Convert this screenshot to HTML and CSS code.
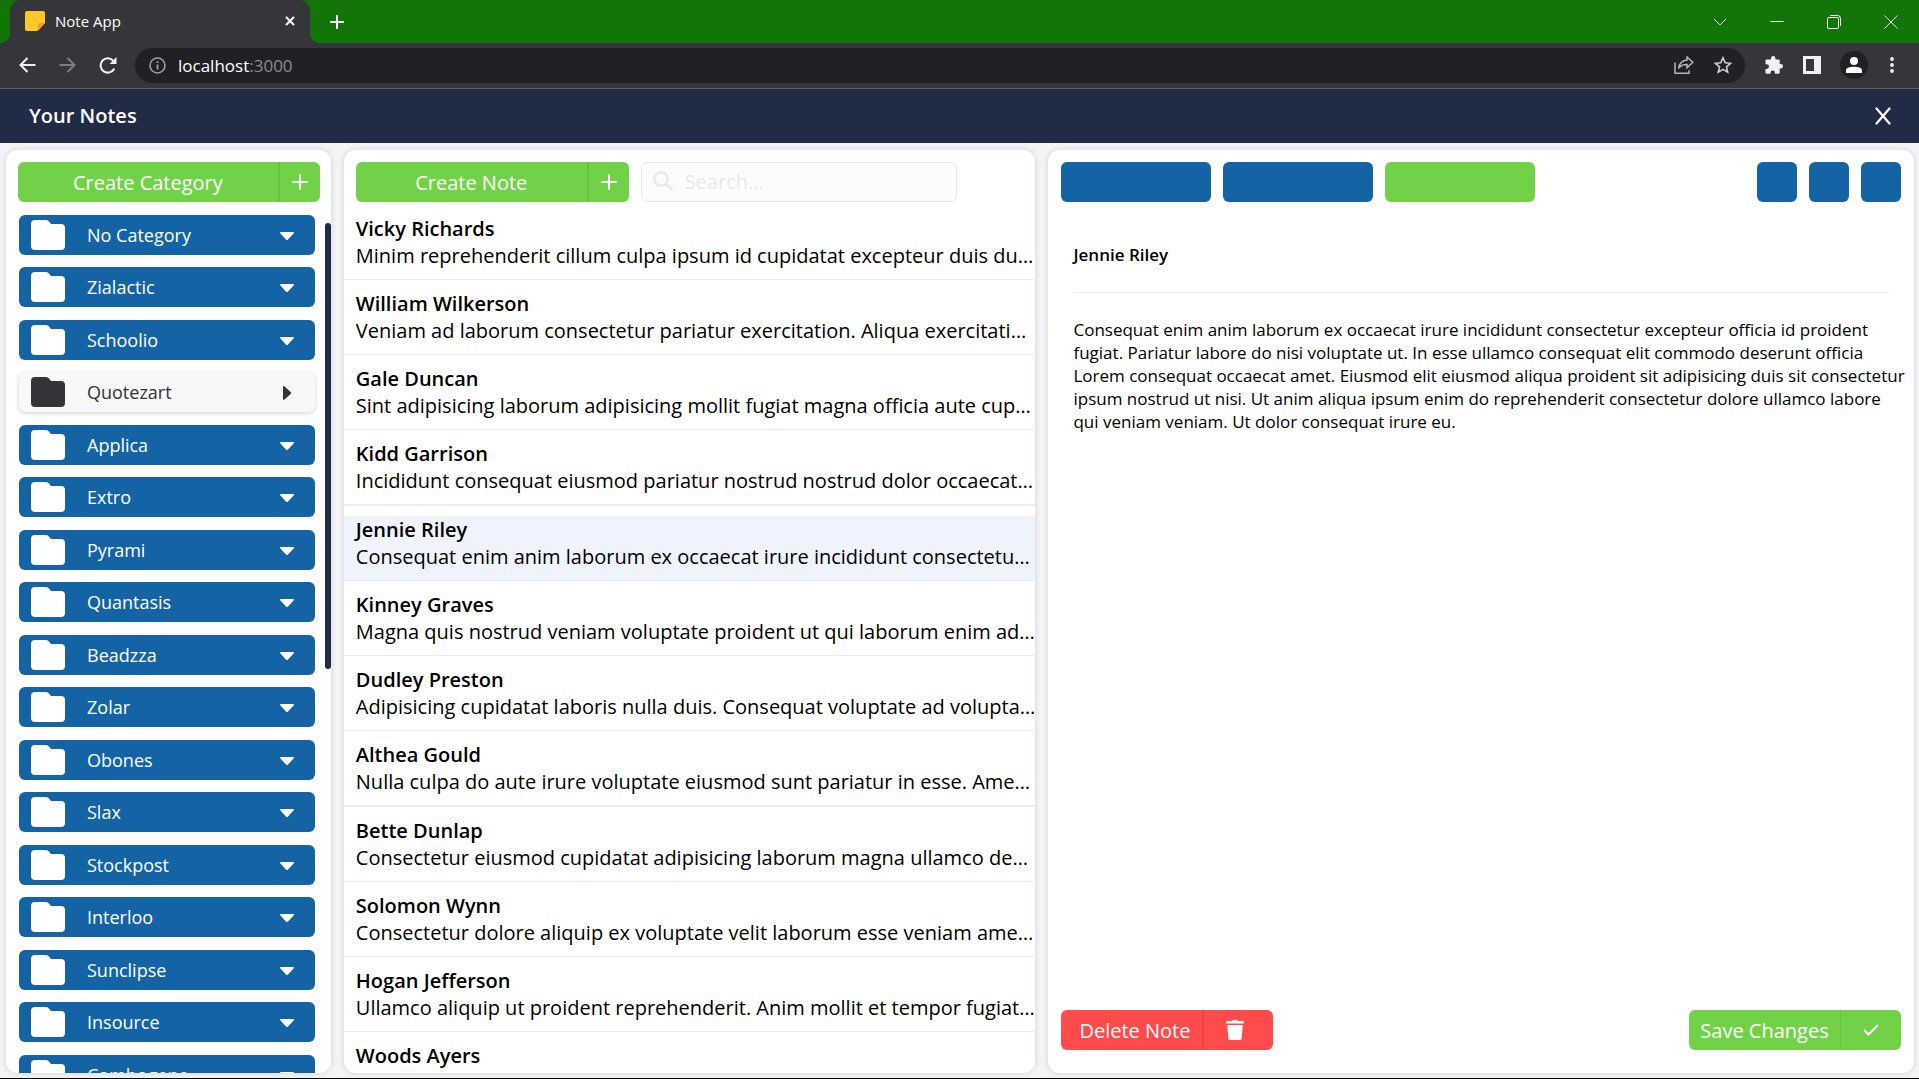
FILE: index.html
```html
<!DOCTYPE html>
<html lang="en">
<head>
<meta charset="utf-8">
<meta name="viewport" content="width=device-width, initial-scale=1">
<title>Note App</title>
<link rel="stylesheet" href="styles.css">
</head>
<body>
<svg class="defs" aria-hidden="true">
  <symbol id="folder" viewBox="0 0 34 30"><path d="M4 0h11q2 0 3 1.500l2 2.500h10q4 0 4 4v18q0 4-4 4H4q-4 0-4-4V4q0-4 4-4z"/></symbol>
  <symbol id="caret" viewBox="0 0 14 14"><path d="M1 3h12q1.600.3.600 1.600L8 10.600q-1 1-2 0L.4 4.600Q-.6 3.300 1 3z"/></symbol>
  <symbol id="plus" viewBox="0 0 16 16"><path d="M8 1v14M1 8h14" fill="none" stroke="currentColor" stroke-width="2" stroke-linecap="round"/></symbol>
</svg>

<div class="tabs">
  <div class="tab">
    <svg class="favicon" viewBox="0 0 20 20"><path d="M2 0h16q2 0 2 2v10l-8 8H2q-2 0-2-2V2q0-2 2-2z" fill="#ffca28"/><path d="M20 12h-5q-2 0-2 2v6z" fill="#ff9052"/></svg>
    <span class="tab-title">Note App</span>
    <button class="bare" aria-label="Close tab"><svg width="10" height="10" viewBox="0 0 10 10"><path d="M1 1l8 8M9 1L1 9" fill="none" stroke="#fff" stroke-width="2"/></svg></button>
  </div>
  <button class="bare new-tab" aria-label="New tab"><svg width="16" height="16" viewBox="0 0 16 16"><path d="M8 1v14M1 8h14" fill="none" stroke="#fff" stroke-width="2"/></svg></button>
  <div class="window-controls">
    <button class="bare" aria-label="Tab search"><svg width="14" height="14" viewBox="0 0 14 14"><path d="M1 4l6 6 6-6"/></svg></button>
    <button class="bare" aria-label="Minimize"><svg width="14" height="14" viewBox="0 0 14 14"><path d="M.5 6.500h13"/></svg></button>
    <button class="bare" aria-label="Restore"><svg width="14" height="14" viewBox="0 0 14 14"><rect x=".5" y="2.500" width="11" height="11" rx="1.500"/><path d="M3 .5h7.500q3 0 3 3V11"/></svg></button>
    <button class="bare" aria-label="Close window"><svg width="14" height="14" viewBox="0 0 14 14"><path d="M.5.5l13 13M13.500.5l-13 13"/></svg></button>
  </div>
</div>

<div class="toolbar">
  <div class="nav">
    <button class="bare" aria-label="Back"><svg width="17" height="16" viewBox="0 0 17 16"><path d="M16.500 8H2M8.500 1L1.500 8l7 7" fill="none" stroke="#f1f1f4" stroke-width="2"/></svg></button>
    <button class="bare" aria-label="Forward"><svg width="17" height="16" viewBox="0 0 17 16"><path d="M.5 8H15M8.500 1l7 7-7 7" fill="none" stroke="#7c7d80" stroke-width="2"/></svg></button>
    <button class="bare" aria-label="Reload"><svg width="18" height="17" viewBox="0 0 18 17"><path d="M15.300 11.500A7.200 7.200 0 1 1 14.500 4" fill="none" stroke="#f1f1f4" stroke-width="2"/><path d="M17.500 0v7h-7z" fill="#f1f1f4"/></svg></button>
  </div>
  <div class="address">
    <svg width="17" height="17" viewBox="0 0 17 17"><circle cx="8.500" cy="8.500" r="7.500" fill="none" stroke="#9aa0a6" stroke-width="1.600"/><path d="M8.500 7.500v5M8.500 4.300v1.800" stroke="#9aa0a6" stroke-width="1.800"/></svg>
    <span class="url">localhost<span class="port">:3000</span></span>
    <div class="address-actions">
      <button class="bare" aria-label="Share"><svg width="20" height="18" viewBox="0 0 20 18" fill="none" stroke="#b5b6b8" stroke-width="1.500"><path d="M1 6.500v10.700h14v-3"/><path d="M13 1l5.800 5.300L13 11.700V8.600c-4 0-6.500 1-8.300 3.700C5.200 8 8 4.500 13 4z"/></svg></button>
      <button class="bare" aria-label="Bookmark"><svg width="18" height="18" viewBox="0 0 18 18"><path d="M9 1.800l2.200 5 5.400.5-4.100 3.600 1.200 5.300L9 13.400l-4.700 2.800 1.200-5.300L1.400 7.300l5.400-.5z" fill="none" stroke="#cfd0d2" stroke-width="1.600"/></svg></button>
    </div>
  </div>
  <div class="extras">
    <button class="bare" aria-label="Extensions"><svg width="18" height="18" viewBox="0 0 18 18"><path d="M1.500 3.500H6V2.300a2.200 2.200 0 0 1 4.400 0v1.200h3.300q1 0 1 1V8h1.100a2.200 2.200 0 0 1 0 4.400h-1.100v4.100q0 1.300-1.300 1.300H9.900v-1.200a2.200 2.200 0 0 0-4.400 0v1.200H1.800q-1.300 0-1.300-1.300v-3.600h1.200a2.300 2.300 0 0 0 0-4.600H.5V4.500q0-1 1-1z" fill="#f1f1f4"/></svg></button>
    <button class="bare" aria-label="Side panel"><svg width="18" height="18" viewBox="0 0 18 18"><path d="M0 0h18v18H0zM3 3v12h8V3z" fill="#f1f1f4" fill-rule="evenodd"/></svg></button>
    <button class="bare avatar" aria-label="Profile"><svg width="16" height="16" viewBox="0 0 16 16" fill="#fff"><circle cx="8" cy="4" r="4"/><path d="M0 16v-2.500Q0 9.800 8 9.800t8 3.700V16z"/></svg></button>
    <button class="bare" aria-label="Menu"><svg width="4" height="16" viewBox="0 0 4 16" fill="#f1f1f4"><circle cx="2" cy="2" r="1.900"/><circle cx="2" cy="8" r="1.900"/><circle cx="2" cy="14" r="1.900"/></svg></button>
  </div>
</div>

<header class="app-header">
  <h1>Your Notes</h1>
  <button class="bare" aria-label="Close"><svg width="16" height="18" viewBox="0 0 16 18"><path d="M1.500 1.500l13 15M14.500 1.500l-13 15" fill="none" stroke="#fff" stroke-width="2.200" stroke-linecap="round"/></svg></button>
</header>

<main class="panels">
  <section class="panel categories" aria-label="Categories">
    <button class="split create-category"><span>Create Category</span><span class="split-icon"><svg width="16" height="16"><use href="#plus"/></svg></span></button>
    <div class="category-scroll">
      <ul class="category-list">
        <li><button class="category"><svg class="folder"><use href="#folder"/></svg><span>No Category</span><svg class="caret"><use href="#caret"/></svg></button></li>
        <li><button class="category"><svg class="folder"><use href="#folder"/></svg><span>Zialactic</span><svg class="caret"><use href="#caret"/></svg></button></li>
        <li><button class="category"><svg class="folder"><use href="#folder"/></svg><span>Schoolio</span><svg class="caret"><use href="#caret"/></svg></button></li>
        <li><button class="category open"><svg class="folder"><use href="#folder"/></svg><span>Quotezart</span><svg class="caret"><use href="#caret"/></svg></button></li>
        <li><button class="category"><svg class="folder"><use href="#folder"/></svg><span>Applica</span><svg class="caret"><use href="#caret"/></svg></button></li>
        <li><button class="category"><svg class="folder"><use href="#folder"/></svg><span>Extro</span><svg class="caret"><use href="#caret"/></svg></button></li>
        <li><button class="category"><svg class="folder"><use href="#folder"/></svg><span>Pyrami</span><svg class="caret"><use href="#caret"/></svg></button></li>
        <li><button class="category"><svg class="folder"><use href="#folder"/></svg><span>Quantasis</span><svg class="caret"><use href="#caret"/></svg></button></li>
        <li><button class="category"><svg class="folder"><use href="#folder"/></svg><span>Beadzza</span><svg class="caret"><use href="#caret"/></svg></button></li>
        <li><button class="category"><svg class="folder"><use href="#folder"/></svg><span>Zolar</span><svg class="caret"><use href="#caret"/></svg></button></li>
        <li><button class="category"><svg class="folder"><use href="#folder"/></svg><span>Obones</span><svg class="caret"><use href="#caret"/></svg></button></li>
        <li><button class="category"><svg class="folder"><use href="#folder"/></svg><span>Slax</span><svg class="caret"><use href="#caret"/></svg></button></li>
        <li><button class="category"><svg class="folder"><use href="#folder"/></svg><span>Stockpost</span><svg class="caret"><use href="#caret"/></svg></button></li>
        <li><button class="category"><svg class="folder"><use href="#folder"/></svg><span>Interloo</span><svg class="caret"><use href="#caret"/></svg></button></li>
        <li><button class="category"><svg class="folder"><use href="#folder"/></svg><span>Sunclipse</span><svg class="caret"><use href="#caret"/></svg></button></li>
        <li><button class="category"><svg class="folder"><use href="#folder"/></svg><span>Insource</span><svg class="caret"><use href="#caret"/></svg></button></li>
        <li><button class="category"><svg class="folder"><use href="#folder"/></svg><span>Combogene</span><svg class="caret"><use href="#caret"/></svg></button></li>
      </ul>
      <div class="scroll-thumb"></div>
    </div>
  </section>

  <section class="panel notes" aria-label="Notes">
    <div class="notes-bar">
      <button class="split"><span>Create Note</span><span class="split-icon"><svg width="16" height="16"><use href="#plus"/></svg></span></button>
      <label class="search">
        <svg width="20" height="20" viewBox="0 0 20 20"><circle cx="8" cy="8" r="6.800" fill="none" stroke="#e9e9e9" stroke-width="2.400"/><path d="M13 13l5.500 5.500" stroke="#e9e9e9" stroke-width="3" stroke-linecap="round"/></svg>
        <input type="search" placeholder="Search..." aria-label="Search notes">
      </label>
    </div>
    <ul class="note-list">
      <li><button class="note"><strong>Vicky Richards</strong><span>Minim reprehenderit cillum culpa ipsum id cupidatat excepteur duis duis magna ullamco.</span></button></li>
      <li><button class="note"><strong>William Wilkerson</strong><span>Veniam ad laborum consectetur pariatur exercitation. Aliqua exercitation nulla ipsum.</span></button></li>
      <li><button class="note"><strong>Gale Duncan</strong><span>Sint adipisicing laborum adipisicing mollit fugiat magna officia aute cupidatat nisi.</span></button></li>
      <li><button class="note"><strong>Kidd Garrison</strong><span>Incididunt consequat eiusmod pariatur nostrud nostrud dolor occaecat mollit nisi.</span></button></li>
      <li><button class="note selected"><strong>Jennie Riley</strong><span>Consequat enim anim laborum ex occaecat irure incididunt consectetur excepteur officia id proident fugiat.</span></button></li>
      <li><button class="note"><strong>Kinney Graves</strong><span>Magna quis nostrud veniam voluptate proident ut qui laborum enim adipisicing elit.</span></button></li>
      <li><button class="note"><strong>Dudley Preston</strong><span>Adipisicing cupidatat laboris nulla duis. Consequat voluptate ad voluptate minim.</span></button></li>
      <li><button class="note"><strong>Althea Gould</strong><span>Nulla culpa do aute irure voluptate eiusmod sunt pariatur in esse. Amet minim sit.</span></button></li>
      <li><button class="note"><strong>Bette Dunlap</strong><span>Consectetur eiusmod cupidatat adipisicing laborum magna ullamco deserunt mollit.</span></button></li>
      <li><button class="note"><strong>Solomon Wynn</strong><span>Consectetur dolore aliquip ex voluptate velit laborum esse veniam amet nisi sint.</span></button></li>
      <li><button class="note"><strong>Hogan Jefferson</strong><span>Ullamco aliquip ut proident reprehenderit. Anim mollit et tempor fugiat magna sit.</span></button></li>
      <li><button class="note"><strong>Woods Ayers</strong><span>Dolore nisi magna laborum.</span></button></li>
    </ul>
  </section>

  <section class="panel editor" aria-label="Note">
    <div class="editor-bar">
      <button class="block" aria-label="Edit"></button>
      <button class="block" aria-label="Preview"></button>
      <button class="block green" aria-label="Publish"></button>
      <div class="editor-tools">
        <button class="block small" aria-label="Bold"></button>
        <button class="block small" aria-label="Italic"></button>
        <button class="block small" aria-label="Underline"></button>
      </div>
    </div>
    <article>
      <h2>Jennie Riley</h2>
      <p>Consequat enim anim laborum ex occaecat irure incididunt consectetur excepteur officia id proident fugiat. Pariatur labore do nisi voluptate ut. In esse ullamco consequat elit commodo deserunt officia Lorem consequat occaecat amet. Eiusmod elit eiusmod aliqua proident sit adipisicing duis sit consectetur ipsum nostrud ut nisi. Ut anim aliqua ipsum enim do reprehenderit consectetur dolore ullamco labore qui veniam veniam. Ut dolor consequat irure eu.</p>
    </article>
    <footer>
      <button class="split delete"><span>Delete Note</span><span class="split-icon"><svg width="18" height="20" viewBox="0 0 18 20" fill="#fff"><path d="M1 1h5l1-1h4l1 1h5q1 0 1 1v1.500H0V2q0-1 1-1z"/><path d="M1.200 5h15.600l-1.200 13.500Q15.400 20 14 20H4q-1.400 0-1.600-1.500z"/></svg></span></button>
      <button class="split save"><span>Save Changes</span><span class="split-icon"><svg width="16" height="12" viewBox="0 0 16 12"><path d="M1.200 6l4.300 4.500L14.800 1.200" fill="none" stroke="#fff" stroke-width="2"/></svg></span></button>
    </footer>
  </section>
</main>
</body>
</html>
```
FILE: styles.css
```css
* { box-sizing: border-box; }

body {
  margin: 0;
  height: 100vh;
  display: flex;
  flex-direction: column;
  overflow: hidden;
  background: #f3f4f7;
  border-bottom: 1px solid #000;
  font-family: "Open Sans", sans-serif;
  color: #000;
}

h1, h2, p, ul { margin: 0; padding: 0; }
ul { list-style: none; }
svg { display: block; flex: none; }
button { font: inherit; color: inherit; border: 0; padding: 0; margin: 0; cursor: pointer; }
.defs { position: absolute; width: 0; height: 0; }
.bare { background: none; display: flex; align-items: center; justify-content: center; }

/* Browser tabs */
.tabs {
  flex: none;
  height: 43px;
  display: flex;
  align-items: center;
  background: #127507;
  padding-left: 10px;
}
.tab {
  position: relative;
  width: 300px;
  height: 43px;
  display: flex;
  align-items: center;
  padding: 0 15px 2px 15px;
  background: #35363a;
  border-radius: 10px 10px 0 0;
  color: #fff;
  font-size: 15px;
}
.tab::before, .tab::after {
  content: "";
  position: absolute;
  bottom: 0;
  width: 10px;
  height: 10px;
}
.tab::before { right: 100%; background: radial-gradient(circle at 0 0, transparent 10px, #35363a 10px); }
.tab::after { left: 100%; background: radial-gradient(circle at 100% 0, transparent 10px, #35363a 10px); }
.favicon { width: 20px; height: 20px; }
.tab-title { flex: 1; margin-left: 10px; }
.new-tab { width: 54px; height: 42px; }
.window-controls { margin-left: auto; display: flex; height: 37px; }
.window-controls .bare { width: 57px; }
.window-controls svg { fill: none; stroke: #fff; stroke-width: 1; }

/* Browser toolbar */
.toolbar {
  flex: none;
  height: 46px;
  display: flex;
  align-items: center;
  padding: 0 25px 1px 19px;
  background: #35363a;
  border-bottom: 1px solid #5d5e62;
}
.nav { display: flex; gap: 23px; width: 116px; }
.address {
  flex: 1;
  height: 35px;
  display: flex;
  align-items: center;
  padding: 0 13px 0 14px;
  border-radius: 18px;
  background: #202124;
  font-size: 17px;
}
.url { flex: 1; margin-left: 12px; color: #fff; }
.port { color: #8d8d8d; }
.address-actions { display: flex; gap: 20px; }
.extras { display: flex; align-items: center; gap: 20px; margin-left: 20px; }
.avatar { width: 28px; height: 28px; border-radius: 50%; background: #202124; margin: 0 2px 0 -1px; }

/* Application header */
.app-header {
  flex: none;
  height: 54px;
  display: flex;
  align-items: center;
  justify-content: space-between;
  padding: 0 28px 1px 29px;
  background: #202b46;
  color: #fff;
}
.app-header h1 { font-size: 20px; font-weight: 600; }

.panels {
  flex: 1;
  min-height: 0;
  display: grid;
  grid-template-columns: minmax(0, 325fr) minmax(0, 692fr) minmax(0, 866fr);
  gap: 13px;
  padding: 7px 5px 5px 6px;
}
.panel {
  min-height: 0;
  display: flex;
  flex-direction: column;
  overflow: hidden;
  background: #fff;
  border-radius: 12px;
  box-shadow: 0 0 6px rgba(0, 0, 0, .14);
  padding-top: 12px;
}

/* Buttons divided into a label and an icon */
.split {
  flex: none;
  height: 40px;
  display: flex;
  overflow: hidden;
  border-radius: 6px;
  background: #72d247;
  color: #fff;
  font-size: 20px;
}
.split > span { display: flex; align-items: center; justify-content: center; height: 40px; flex: 1; }
.split > .split-icon { flex: none; width: 42px; border-left: 2px solid #67c43f; }

/* Categories */
.create-category { margin: 0 11px 0 12px; }
.category-scroll { flex: 1; min-height: 0; display: flex; margin-top: 13px; }
.category-list {
  flex: 1;
  display: grid;
  grid-auto-rows: 52px 53px;
  padding: 0 10px 0 13px;
}
.category {
  width: 100%;
  height: 40px;
  display: flex;
  align-items: center;
  padding: 0 21px 0 12px;
  border-radius: 6px;
  background: #1464a5;
  color: #fff;
  font-size: 18px;
  text-align: left;
}
.category svg { fill: currentColor; }
.category span { flex: 1; margin-left: 22px; }
.folder { width: 34px; height: 30px; }
.caret { width: 14px; height: 14px; margin-top: 2px; }
.category.open { background: #f8f8fa; color: #333438; box-shadow: 0 1px 4px rgba(0, 0, 0, .2); }
.category.open .caret { transform: rotate(-90deg); }
.scroll-thumb { width: 6px; height: 52%; margin-top: 8px; border-radius: 3px; background: #202b46; }

/* Notes */
.notes-bar {
  flex: none;
  display: grid;
  grid-template-columns: minmax(0, 273fr) minmax(0, 317fr);
  gap: 12px;
  padding: 0 78px 0 12px;
}
.search {
  height: 40px;
  display: flex;
  align-items: center;
  gap: 12px;
  padding: 0 11px 2px;
  border: 1px solid #e9e9e9;
  border-radius: 6px;
  background: #fcfcfc;
}
.search input {
  flex: 1;
  min-width: 0;
  border: 0;
  padding: 0;
  outline: 0;
  background: none;
  font: inherit;
  font-size: 20px;
}
.search input::placeholder { color: #e9e9e9; opacity: 1; }
.note-list {
  flex: 1;
  min-height: 0;
  display: grid;
  grid-auto-rows: 75px 75px 75px 76px;
  align-content: start;
  margin-top: 3px;
}
.note-list li { min-width: 0; border-bottom: 1px solid #ececee; padding-top: 10px; }
.note-list li:nth-child(4n) { border-bottom-width: 2px; }
.note {
  width: 100%;
  height: 100%;
  display: flex;
  flex-direction: column;
  padding-left: 12px;
  background: none;
  text-align: left;
  font-size: 20px;
  line-height: 27px;
}
.note strong { font-weight: 600; }
.note span { width: 100%; overflow: hidden; white-space: nowrap; text-overflow: ellipsis; }
.note.selected { background: #eff3fe; }

/* Editor */
.editor-bar { flex: none; display: flex; gap: 12px; padding: 0 13px; }
.block { width: 150px; height: 40px; border-radius: 6px; background: #1464a5; }
.block.green { background: #72d247; }
.block.small { width: 40px; }
.editor-tools { margin-left: auto; display: flex; gap: 12px; }
article { flex: 1; min-height: 0; padding: 41px 5px 0 25px; font-size: 17px; line-height: 23px; }
article h2 {
  margin-right: 20px;
  font-size: 17px;
  font-weight: 600;
  padding-bottom: 26px;
  border-bottom: 1px solid #ececee;
}
article p { padding-top: 25px; }
footer { flex: none; display: flex; justify-content: space-between; padding: 0 13px 23px; }
footer .split { width: 212px; }
.delete { background: #ff4b4b; }
.delete > span:first-child { padding-left: 6px; }
.delete > .split-icon { width: 71px; border-left-color: #e6454a; padding-right: 8px; }
.save > .split-icon { width: 61px; border-left-width: 1px; }
```
